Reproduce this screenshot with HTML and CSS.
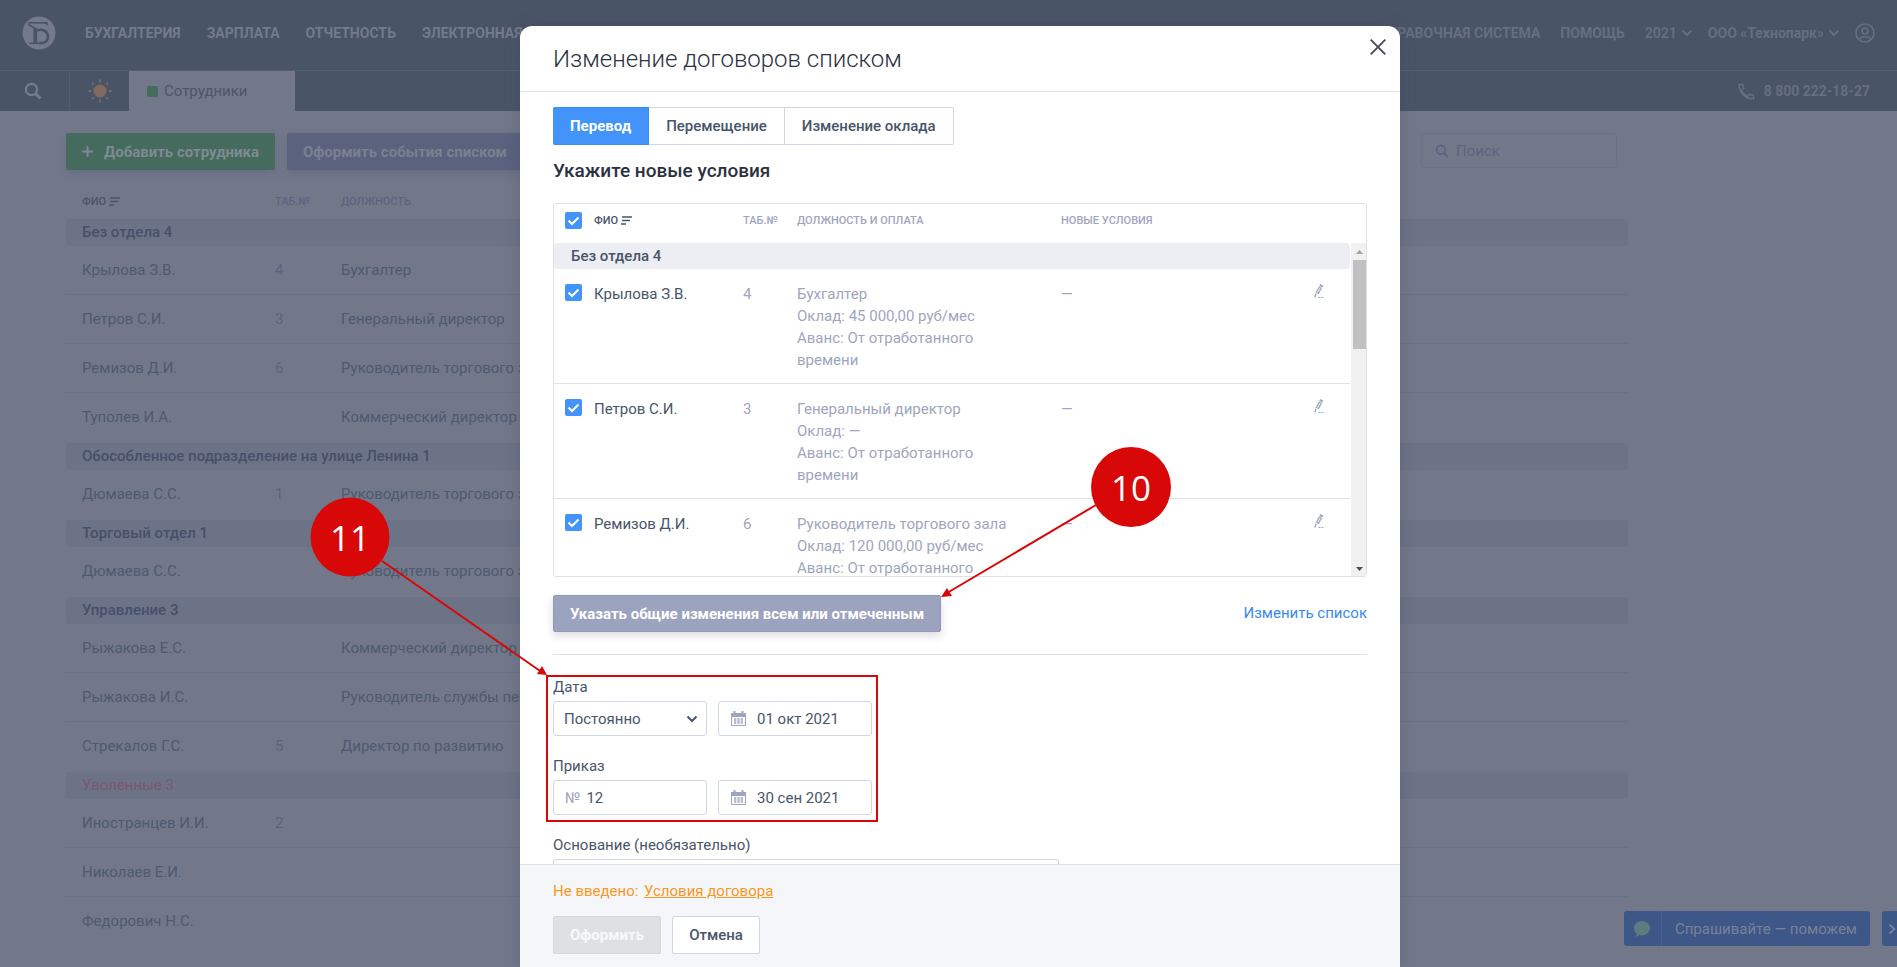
FILE: index.html
```html
<!DOCTYPE html>
<html lang="ru">
<head>
<meta charset="utf-8">
<title>Сотрудники</title>
<link rel="stylesheet" href="styles.css">
</head>
<body>
<svg class="sprite" aria-hidden="true">
  <symbol id="sort" viewBox="0 0 11 9"><path d="M1 1h10M1 4.500h8M0 8h5" stroke="currentColor" stroke-width="1.500" fill="none"/></symbol>
  <symbol id="chevron" viewBox="0 0 12 8"><path d="M1.500 1.500 6 6l4.500-4.500" stroke="currentColor" stroke-width="2" fill="none"/></symbol>
  <symbol id="calendar" viewBox="0 0 15 15"><path d="M0 2h15v4H0z" fill="currentColor"/><path d="M3.500 0v4M11.500 0v4" stroke="currentColor" stroke-width="2"/><path d="M.500 5v9.500h14V5" stroke="currentColor" fill="none"/><path d="M3 8h9M3 10h9M3 12h9" stroke="currentColor" stroke-width="1.600" stroke-dasharray="2.300 1"/></symbol>
  <symbol id="pencil" viewBox="0 0 11 16"><g stroke="currentColor" fill="none"><path d="M7.800 1.800 3.200 10.500" stroke-width="3.600" stroke-dasharray="2.200 .600 9"/><path d="M6.200 4.900 3.700 9.600" stroke="#fff" stroke-width=".900"/><path d="M2 10.800.800 14.500" stroke-width="1.400"/><path d="M4.500 14.500h6" stroke-dasharray="2 1"/></g></symbol>
  <symbol id="lens" viewBox="0 0 18 18"><circle cx="7.500" cy="7.500" r="5.600" fill="none" stroke="currentColor" stroke-width="2.200"/><path d="m11.500 11.500 5 5" stroke="currentColor" stroke-width="2.800"/></symbol>
</svg>

<div class="page">
  <header class="top">
    <a class="logo" href="#" aria-label="Главная">
      <svg viewBox="0 0 34 34" width="34" height="34"><circle cx="17" cy="17" r="16.500" fill="#737a8c"/><g fill="none" stroke="#4a5467"><path d="M6 6.800h19" stroke-width="1.600"/><path d="m22 6.500 3.500 3.500.5-3.500z" fill="#4a5467" stroke="none"/><path d="M13.300 12v15" stroke-width="3.800"/><path d="M7.500 27.300h12" stroke-width="1.600"/><path d="M15.500 14.300c5-1.500 10.500.500 10.500 6.500 0 4.500-3.500 6.500-8.500 6.300" stroke-width="2.600"/><path d="M6 8c2.500 2.500 5.500 2 9.500 6.300" stroke-width="1.600"/></g></svg>
    </a>
    <nav class="menu">
      <a href="#">БУХГАЛТЕРИЯ</a><a href="#">ЗАРПЛАТА</a><a href="#">ОТЧЕТНОСТЬ</a><a href="#">ЭЛЕКТРОННАЯ</a>
    </nav>
    <div class="account">
      <a href="#">СПРАВОЧНАЯ СИСТЕМА</a>
      <a href="#">ПОМОЩЬ</a>
      <button type="button" class="drop">2021 <svg width="12" height="8"><use href="#chevron"/></svg></button>
      <button type="button" class="drop">ООО «Технопарк» <svg width="12" height="8"><use href="#chevron"/></svg></button>
      <button type="button" class="user" aria-label="Профиль"><svg viewBox="0 0 20 20" width="20" height="20" fill="none" stroke="currentColor" stroke-width="1.700"><circle cx="10" cy="10" r="9"/><circle cx="10" cy="8" r="3"/><path d="M4 16c1.500-3 10.500-3 12 0"/></svg></button>
    </div>
  </header>
  <div class="tabs">
    <button type="button" class="tab-search" aria-label="Поиск"><svg width="18" height="18"><use href="#lens"/></svg></button>
    <button type="button" class="tab-sun" aria-label="Главная"><svg viewBox="0 0 24 24" width="24" height="24"><circle cx="12" cy="12" r="6.500" fill="#806b60"/><path d="M12 .500v3M12 20.500v3M.500 12h3M20.500 12h3M3.900 3.900l2 2M18.100 18.100l2 2M3.900 20.100l2-2M18.100 5.900l2-2" stroke="#806b60" stroke-width="1.800"/></svg></button>
    <a class="tab-current" href="#"><i></i>Сотрудники</a>
    <a class="phone" href="#"><svg viewBox="0 0 17 17" width="17" height="17" fill="none" stroke="currentColor" stroke-width="1.500"><path d="M1 1.500h3.600l1 4-2 1.600c1 3 3.300 5.200 6.300 6.300l1.600-2 4 1v3.300C8 16.500 1 10 1 1.500z"/></svg>8 800 222-18-27</a>
  </div>

  <main class="content">
    <div class="toolbar">
      <button type="button" class="btn add"><svg viewBox="0 0 11 11" width="11" height="11"><path d="M5.500 0v11M0 5.500h11" stroke="currentColor" stroke-width="2"/></svg>Добавить сотрудника</button>
      <button type="button" class="btn events">Оформить события списком</button>
      <label class="find"><svg width="14" height="14"><use href="#lens"/></svg><input type="search" placeholder="Поиск" aria-label="Поиск"></label>
    </div>
    <table class="staff">
      <colgroup><col class="s-name"><col class="s-num"><col></colgroup>
      <thead><tr><th class="sorted">ФИО <svg width="11" height="9"><use href="#sort"/></svg></th><th>ТАБ.№</th><th>ДОЛЖНОСТЬ</th></tr></thead>
      <tbody>
        <tr class="group"><td colspan="3">Без отдела 4</td></tr>
        <tr><td>Крылова З.В.</td><td>4</td><td>Бухгалтер</td></tr>
        <tr><td>Петров С.И.</td><td>3</td><td>Генеральный директор</td></tr>
        <tr><td>Ремизов Д.И.</td><td>6</td><td>Руководитель торгового зала</td></tr>
        <tr class="last"><td>Туполев И.А.</td><td></td><td>Коммерческий директор</td></tr>
        <tr class="group"><td colspan="3">Обособленное подразделение на улице Ленина 1</td></tr>
        <tr class="last"><td>Дюмаева С.С.</td><td>1</td><td>Руководитель торгового зала</td></tr>
        <tr class="group"><td colspan="3">Торговый отдел 1</td></tr>
        <tr class="last"><td>Дюмаева С.С.</td><td></td><td>Руководитель торгового зала</td></tr>
        <tr class="group"><td colspan="3">Управление 3</td></tr>
        <tr><td>Рыжакова Е.С.</td><td></td><td>Коммерческий директор</td></tr>
        <tr><td>Рыжакова И.С.</td><td></td><td>Руководитель службы персонала</td></tr>
        <tr class="last"><td>Стрекалов Г.С.</td><td>5</td><td>Директор по развитию</td></tr>
        <tr class="group fired"><td colspan="3">Уволенные 3</td></tr>
        <tr><td>Иностранцев И.И.</td><td>2</td><td></td></tr>
        <tr><td>Николаев Е.И.</td><td></td><td></td></tr>
        <tr class="last"><td>Федорович Н.С.</td><td></td><td></td></tr>
      </tbody>
    </table>
  </main>

  <div class="chat">
    <button type="button" class="ask"><span class="bubble"><svg viewBox="0 0 16 16" width="16" height="16"><path d="M8 0c4.400 0 8 3 8 7s-3.600 7.500-8 7.500c-1 0-1.800-.100-2.600-.400-.800.900-2 1.600-3.900 1.600 1-1 1.200-2 1-3.200C1 11.200 0 9.500 0 7.300 0 3 3.600 0 8 0z" fill="#5b7c80"/></svg></span><span class="ask-text">Спрашивайте — поможем</span></button>
    <button type="button" class="hide" aria-label="Скрыть"><svg viewBox="0 0 8 12" width="8" height="12"><path d="m1.500 1.500 5 4.500-5 4.500" fill="none" stroke="currentColor" stroke-width="1.700"/></svg></button>
  </div>
</div>

<div class="overlay">
  <section class="modal" role="dialog" aria-labelledby="title">
    <header class="modal-head">
      <h1 id="title">Изменение договоров списком</h1>
      <button type="button" class="close" aria-label="Закрыть"><svg viewBox="0 0 16 16" width="16" height="16"><path d="m.700.700 14.600 14.600M15.300.700.700 15.300" stroke="currentColor" stroke-width="1.800"/></svg></button>
    </header>

    <div class="modal-body">
      <div class="switch">
        <button type="button" class="active">Перевод</button><button type="button">Перемещение</button><button type="button">Изменение оклада</button>
      </div>
      <h2>Укажите новые условия</h2>

      <div class="list">
        <table>
          <colgroup><col class="c-check"><col class="c-name"><col class="c-num"><col class="c-post"><col><col class="c-edit"></colgroup>
          <thead><tr><th><input type="checkbox" checked aria-label="Выбрать всех"></th><th class="sorted">ФИО <svg width="11" height="9"><use href="#sort"/></svg></th><th>ТАБ.№</th><th>ДОЛЖНОСТЬ И ОПЛАТА</th><th>НОВЫЕ УСЛОВИЯ</th><th></th></tr></thead>
          <tbody>
            <tr class="group"><td colspan="6">Без отдела 4</td></tr>
            <tr><td><input type="checkbox" id="p1" checked></td><td><label for="p1">Крылова З.В.</label></td><td>4</td><td>Бухгалтер<br>Оклад: 45 000,00 руб/мес<br>Аванс: От отработанного времени</td><td>—</td><td><button type="button" aria-label="Изменить"><svg width="11" height="16"><use href="#pencil"/></svg></button></td></tr>
            <tr><td><input type="checkbox" id="p2" checked></td><td><label for="p2">Петров С.И.</label></td><td>3</td><td>Генеральный директор<br>Оклад: —<br>Аванс: От отработанного времени</td><td>—</td><td><button type="button" aria-label="Изменить"><svg width="11" height="16"><use href="#pencil"/></svg></button></td></tr>
            <tr><td><input type="checkbox" id="p3" checked></td><td><label for="p3">Ремизов Д.И.</label></td><td>6</td><td>Руководитель торгового зала<br>Оклад: 120 000,00 руб/мес<br>Аванс: От отработанного</td><td>—</td><td><button type="button" aria-label="Изменить"><svg width="11" height="16"><use href="#pencil"/></svg></button></td></tr>
          </tbody>
        </table>
        <div class="scroll" aria-hidden="true">
          <svg viewBox="0 0 7 4" width="7" height="4"><path d="M0 4 3.500 0 7 4z" fill="#a3a3a3"/></svg>
          <span class="thumb"></span>
          <svg viewBox="0 0 7 4" width="7" height="4"><path d="M0 0h7L3.500 4z" fill="#505050"/></svg>
        </div>
      </div>

      <div class="actions">
        <button type="button" class="btn common">Указать общие изменения всем или отмеченным</button>
        <a href="#">Изменить список</a>
      </div>

      <form class="form">
        <div class="field">
          <label for="kind">Дата</label>
          <div class="pair">
            <span class="box select"><select id="kind"><option>Постоянно</option></select><svg width="12" height="8"><use href="#chevron"/></svg></span>
            <span class="box date"><svg width="15" height="15"><use href="#calendar"/></svg><input type="text" value="01 окт 2021" aria-label="Дата изменения"></span>
          </div>
        </div>
        <div class="field">
          <label for="num">Приказ</label>
          <div class="pair">
            <span class="box number"><span>№</span><input type="text" id="num" value="12"></span>
            <span class="box date"><svg width="15" height="15"><use href="#calendar"/></svg><input type="text" value="30 сен 2021" aria-label="Дата приказа"></span>
          </div>
        </div>
        <div class="field">
          <label for="reason">Основание (необязательно)</label>
          <textarea id="reason" class="reason"></textarea>
        </div>
      </form>
    </div>

    <footer class="modal-foot">
      <p>Не введено: <a href="#">Условия договора</a></p>
      <div class="foot-buttons">
        <button type="button" class="submit" disabled>Оформить</button>
        <button type="button" class="cancel">Отмена</button>
      </div>
    </footer>

    <svg class="notes" width="880" height="941" aria-hidden="true">
      <g stroke="#d80808" stroke-width="2" fill="none">
        <path d="M576 479 427 567M-138 535 23 647"/>
        <path d="M27 650h330v145H27z"/>
      </g>
      <g fill="#d80808">
        <path d="m421 571 6-9 5 8zM27 649l-10-1 5-8z"/>
        <circle cx="611" cy="461" r="40"/>
        <circle cx="-170" cy="511" r="39.500"/>
      </g>
      <g class="note-text"><text x="611" y="475">10</text><text x="-170" y="525">11</text></g>
    </svg>
  </section>
</div>
</body>
</html>
```

FILE: styles.css
```css
:root {
  --blue: #4294fb;
  --line: #dfe0ea;
  --edge: #d1d5e8;
  --text: #47566a;
  --muted: #9fa5c0;
  --dim: #72788a;
  --dim-dark: #4a5467;
  --dim-line: #677387;
}

* { box-sizing: border-box; }

body {
  margin: 0;
  height: 100vh;
  overflow: hidden;
  position: relative;
  background: var(--dim);
  font: 15px/22px Roboto, "Noto Sans", sans-serif;
  color: var(--text);
}

button, input, select, textarea { font: inherit; color: inherit; }
button { border: 0; padding: 0; background: none; }
a { text-decoration: none; color: inherit; }
table { border-collapse: separate; border-spacing: 0; table-layout: fixed; width: 100%; }
th, td { padding: 0; text-align: left; vertical-align: top; }
.sprite { display: none; }

/* page under the dialog */
.page { min-height: 100vh; color: #4e5a6f; }

.top {
  display: flex;
  align-items: center;
  height: 71px;
  padding: 0 22px 4px 22px;
  background: var(--dim-dark);
  border-bottom: 1px solid #535e70;
  font-size: 14px;
  font-weight: 700;
  color: #737a8c;
}
.logo { display: flex; margin-right: 29px; }
.menu { display: flex; gap: 26px; }
.account { display: flex; align-items: center; gap: 15px; margin-left: auto; color: #666e81; }
.account a { margin-right: 5px; }
.drop { display: flex; align-items: center; gap: 4px; }
.user { display: flex; }

.tabs { display: flex; height: 40px; background: var(--dim-dark); }
.tab-search { width: 70px; border-right: 1px solid #535e70; color: #6c8287; display: grid; place-items: center; padding-right: 3px; }
.tab-sun { width: 59px; display: grid; place-items: center; }
.tab-current { width: 166px; display: flex; align-items: center; gap: 6px; padding-left: 18px; background: var(--dim); color: #4e5569; }
.tab-current i { width: 11px; height: 11px; border-radius: 2px; background: #456b5e; }
.phone { display: flex; align-items: center; gap: 9px; margin-left: auto; padding-right: 27px; font-size: 14px; font-weight: 700; color: #666e81; }

.content { padding: 22px 269px 0 66px; }
.toolbar { display: flex; gap: 12px; align-items: flex-start; }
.btn {
  height: 37px;
  padding: 0 16px;
  border-radius: 2px;
  font-weight: 700;
  box-shadow: 0 4px 8px rgba(70, 60, 100, .18);
}
.add { display: flex; align-items: center; gap: 11px; background: #456b5e; color: #7d8a92; }
.events { background: #5a627e; color: #7a8093; }
.find {
  display: flex;
  align-items: center;
  gap: 7px;
  width: 196px;
  height: 35px;
  margin-left: auto;
  margin-right: 11px;
  padding: 0 13px;
  border: 1px solid var(--dim-line);
  border-radius: 3px;
  color: #5c6480;
}
.find input { flex: 1; min-width: 0; border: 0; padding: 0; background: none; outline: 0; }
.find input::placeholder { color: #5c6480; }

.s-name { width: 209px; }
.s-num { width: 66px; }
.staff { margin-top: 22px; }
.staff th { height: 27px; font-size: 11px; line-height: 20px; font-weight: 500; color: #5c6480; }
.staff th.sorted { color: #4a546b; }
.staff th:first-child { padding-left: 16px; }
.staff td { height: 49px; padding-top: 14px; line-height: 20px; border-bottom: 1px solid var(--dim-line); }
.staff td:first-child { padding-left: 16px; }
.staff td:nth-child(2) { color: #5c6480; }
.staff .last td { height: 50px; border-bottom: 0; }
.staff tr:last-child td { height: 49px; }
.staff .group td { height: 27px; padding-top: 3px; border: 0; border-radius: 4px; background: #6c7387; font-weight: 500; color: #465069; }
.staff .group.fired td { color: #7d5670; font-weight: 400; }

.chat { position: absolute; right: 0; bottom: 21px; display: flex; gap: 12px; color: #7a8194; }
.ask { display: flex; height: 35px; border-radius: 3px; background: #3d5789; }
.bubble { display: grid; place-items: center; width: 38px; height: 35px; border-right: 1px solid #4a6190; }
.ask-text { padding: 0 13px; line-height: 36px; }
.hide { display: grid; place-items: center; width: 15px; height: 35px; padding-left: 5px; border-radius: 3px 0 0 3px; background: #3d5789; overflow: hidden; }

/* dialog */
.overlay { position: absolute; inset: 0; display: flex; justify-content: center; padding: 26px 0 0 23px; }
.modal {
  position: relative;
  display: flex;
  flex-direction: column;
  width: 880px;
  max-width: 100%;
  border-radius: 12px 12px 0 0;
  background: #fff;
  box-shadow: 0 0 16px rgba(60, 70, 90, .3);
}
.modal-head { display: flex; justify-content: space-between; align-items: flex-start; padding: 13px 14px 12px 33px; border-bottom: 1px solid var(--line); }
.modal-head h1 { margin: 0; padding: 4px 0; font-size: 24px; line-height: 32px; font-weight: 300; color: #2c3140; }
.close { display: flex; color: #454a59; }

.modal-body { flex: 1; min-height: 0; overflow: hidden; padding: 15px 33px 0; }
.switch { display: flex; }
.switch button { height: 38px; padding: 0 17px; border: 1px solid var(--edge); border-left-width: 0; font-weight: 500; }
.switch button:last-child { border-radius: 0 2px 2px 0; }
.switch .active { background: var(--blue); border-color: #3d8cf2; border-radius: 2px 0 0 2px; color: #fff; font-weight: 700; }
.modal-body h2 { margin: 13px 0 20px; font-size: 19px; line-height: 25px; font-weight: 500; color: #2c3140; }

.list { position: relative; height: 374px; overflow: hidden; border: 1px solid var(--line); border-radius: 3px; }
.list table { width: calc(100% - 16px); }
.c-check { width: 40px; }
.c-name { width: 149px; }
.c-num { width: 54px; }
.c-post { width: 264px; }
.c-edit { width: 36px; }
.list th { height: 39px; padding-top: 6px; font-size: 11px; font-weight: 500; color: var(--muted); white-space: nowrap; }
th.sorted svg { display: inline-block; vertical-align: -1px; }
.list th.sorted { color: var(--text); }
.list td { height: 115px; padding-top: 14px; color: var(--muted); border-bottom: 1px solid var(--line); }
.list td:nth-child(2) { color: var(--text); }
.list td:nth-child(4) { padding-right: 50px; }
.list tr:last-child td { border-bottom: 0; }
.list td:first-child, .list th:first-child { padding-left: 11px; }
.list .group td { height: 26px; padding: 2px 17px; border: 0; border-radius: 4px; background: #edeef4; color: var(--text); font-weight: 500; }
.list input {
  appearance: none;
  display: block;
  width: 17px;
  height: 17px;
  margin: 2px 0;
  border-radius: 2px;
  background: var(--blue) url("data:image/svg+xml,%3Csvg xmlns='http://www.w3.org/2000/svg' viewBox='0 0 17 17'%3E%3Cpath d='m3.500 8.500 3.500 3.500 6.500-6.500' fill='none' stroke='white' stroke-width='2'/%3E%3C/svg%3E");
}
.list td input { margin: 1px 0; }
.list td button { display: block; color: var(--muted); }
.scroll {
  position: absolute;
  top: 39px;
  right: 0;
  bottom: 0;
  width: 15px;
  display: flex;
  flex-direction: column;
  align-items: center;
  justify-content: space-between;
  padding: 7px 0 5px 2px;
  background: #f1f1f1;
}
.thumb { width: 100%; height: 89px; margin: 6px 0 auto; background: #c1c1c1; }

.actions { display: flex; justify-content: space-between; align-items: flex-start; padding: 18px 0 22px; border-bottom: 1px solid var(--line); }
.actions a { line-height: 37px; color: #3a89ef; }
.common { background: #9ca3bf; border: 1px solid #9299b8; color: #fff; }

.field { padding-top: 21px; }
.field > label { display: block; margin-bottom: 3px; }
.field + .field { padding-top: 19px; }
.pair { display: flex; gap: 11px; }
.box { display: flex; align-items: center; width: 154px; height: 35px; border: 1px solid var(--edge); border-radius: 3px; }
.box input { flex: 1; min-width: 0; border: 0; padding: 0; background: none; outline: 0; }
.select { position: relative; }
.select select { appearance: none; width: 100%; height: 100%; padding: 0 10px; border: 0; background: none; outline: 0; }
.select svg { position: absolute; right: 8px; pointer-events: none; }
.date { gap: 11px; padding: 0 12px; }
.date svg { color: var(--muted); }
.number { gap: 6px; padding: 0 11px; }
.number span { color: var(--muted); }
.reason { display: block; width: 506px; max-width: 100%; height: 60px; border: 1px solid var(--edge); border-radius: 3px; resize: none; }

.modal-foot { padding: 15px 33px 13px; border-top: 1px solid var(--line); background: #f5f6f9; }
.modal-foot p { margin: 0 0 14px; color: #f7981d; }
.modal-foot p a { margin-left: 2px; text-decoration: underline; }
.foot-buttons { display: flex; gap: 11px; }
.foot-buttons button { height: 38px; padding: 0 16px; border: 1px solid var(--edge); border-radius: 2px; }
.foot-buttons .submit { background: #dfe0e4; border-color: #d5d7dc; color: #f7f8fa; font-weight: 700; }
.foot-buttons .cancel { background: #fff; font-weight: 500; }

/* callouts drawn over the dialog */
.notes { position: absolute; left: 0; top: 0; overflow: visible; pointer-events: none; }
.note-text { font: 35px "Open Sans", "Noto Sans", sans-serif; fill: #fff; text-anchor: middle; }
```
